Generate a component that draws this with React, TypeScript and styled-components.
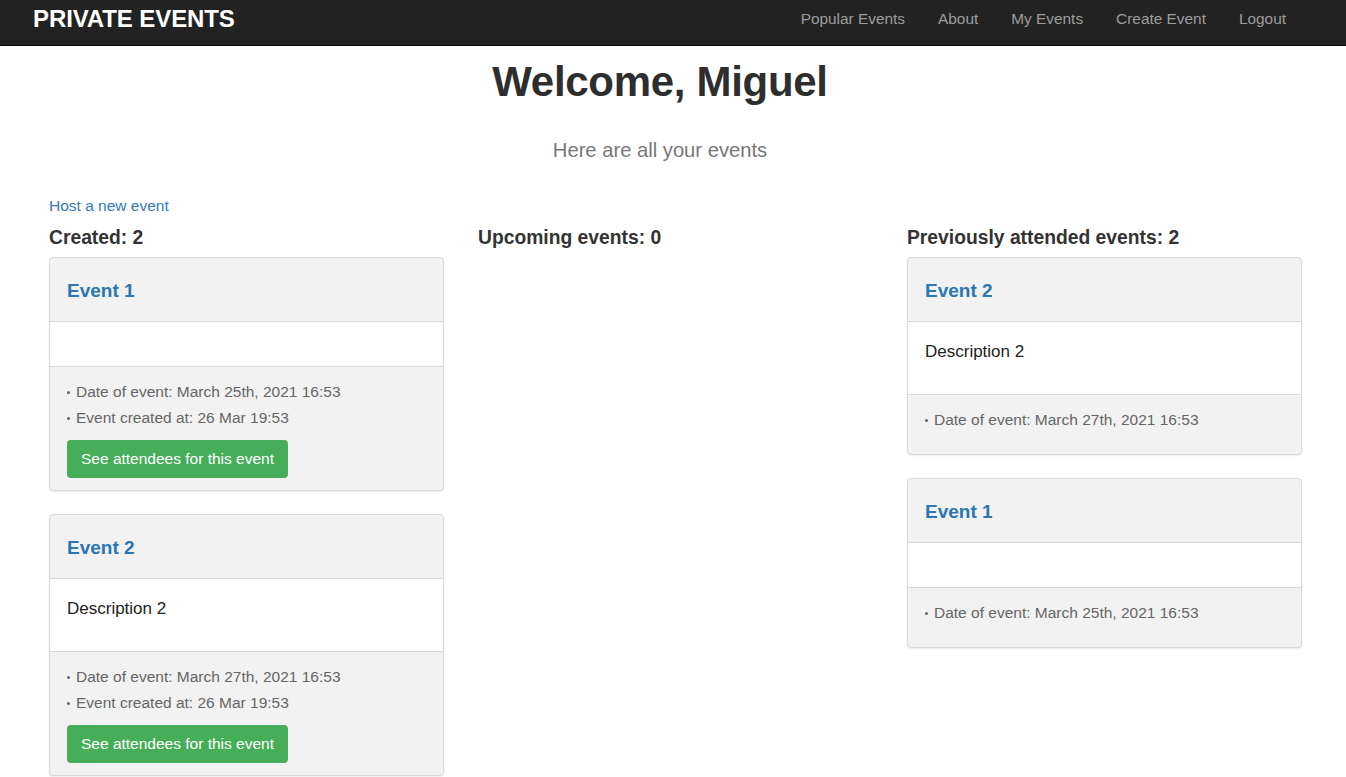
import React from "react";
import styled, { createGlobalStyle } from "styled-components";

const GlobalStyle = createGlobalStyle`
  html, body { margin: 0; padding: 0; background: #fff; }
  body {
    font-family: "Liberation Sans", Arial, Helvetica, sans-serif;
    color: #333;
    font-size: 15px;
    line-height: 20px;
  }
  * { box-sizing: border-box; }
`;

const Navbar = styled.nav`
  height: 46px;
  background: #222;
  border-bottom: 1px solid #080808;
  display: flex;
  align-items: center;
  justify-content: space-between;
  padding: 0 60px 0 33px;
`;

const Brand = styled.a`
  color: #fff;
  font-weight: bold;
  font-size: 24px;
  letter-spacing: -0.1px;
  text-decoration: none;
  line-height: 24px;
  margin-top: -8px;
`;

const NavLinks = styled.div`
  display: flex;
  gap: 33px;
  margin-top: -8px;
`;

const NavLink = styled.a`
  color: #9d9d9d;
  font-size: 15.4px;
  text-decoration: none;
`;

const Hero = styled.header`
  text-align: center;
  padding: 13px 26px 0 0;
`;

const Title = styled.h1`
  margin: 0;
  font-size: 42px;
  line-height: 46px;
  font-weight: bold;
  letter-spacing: -0.3px;
  color: #2e2e2e;
`;

const Subtitle = styled.p`
  margin: 33px 0 0;
  font-size: 20.2px;
  line-height: 24px;
  color: #777;
`;

const Main = styled.main`
  padding: 34px 0 0 34px;
`;

const HostLink = styled.a`
  display: block;
  margin-left: 15px;
  color: #337ab7;
  text-decoration: none;
  font-size: 15.5px;
  line-height: 20px;
`;

const Columns = styled.div`
  display: grid;
  grid-template-columns: repeat(3, 429px);
  margin-top: 11px;
`;

const Column = styled.section`
  padding: 0 15px;
`;

const ColumnHeading = styled.h3`
  margin: 0 0 8px;
  font-size: 19.3px;
  line-height: 22px;
  font-weight: bold;
  color: #333;
`;

const Card = styled.article`
  width: 395px;
  border: 1px solid #d9d9d9;
  border-radius: 4px;
  box-shadow: 0 1px 2px rgba(0, 0, 0, 0.08);
  margin-bottom: 23px;
  overflow: hidden;
  background: #f2f2f2;
`;

const CardHeader = styled.div`
  padding: 22px 17px 19px;
  border-bottom: 1px solid #d9d9d9;
`;

const CardTitle = styled.a`
  display: block;
  font-size: 19px;
  line-height: 22px;
  font-weight: bold;
  color: #2b76b3;
  text-decoration: none;
`;

const CardBody = styled.div`
  background: #fff;
  padding: 20px 17px 24px;
  border-bottom: 1px solid #d9d9d9;
  min-height: 45px;
`;

const Description = styled.p`
  margin: 0 0 8px;
  font-size: 17px;
  line-height: 20px;
  color: #222;
`;

const CardFooter = styled.div`
  padding: 15px 17px 12px;
`;

const InfoList = styled.ul`
  list-style: none;
  margin: 0 0 12px;
  padding: 0;
  display: flex;
  flex-direction: column;
  gap: 6px;
`;

const InfoItem = styled.li`
  display: flex;
  align-items: center;
  font-size: 15.5px;
  line-height: 20px;
  color: #666;
  &::before {
    content: "";
    width: 3px;
    height: 3px;
    border-radius: 50%;
    background: #666;
    margin-right: 6px;
    flex: none;
  }
`;

const SuccessButton = styled.button`
  display: block;
  height: 38px;
  padding: 0 14px;
  border: none;
  border-radius: 4px;
  background: #46ae58;
  color: #fff;
  font-family: inherit;
  font-size: 15.5px;
  cursor: pointer;
`;

type EventCardProps = {
  title: string;
  description?: string;
  date: string;
  created?: string;
  showAttendees?: boolean;
};

function EventCard({ title, description, date, created, showAttendees }: EventCardProps) {
  return (
    <Card>
      <CardHeader>
        <CardTitle href="#">{title}</CardTitle>
      </CardHeader>
      <CardBody>{description && <Description>{description}</Description>}</CardBody>
      <CardFooter>
        <InfoList>
          <InfoItem>Date of event: {date}</InfoItem>
          {created && <InfoItem>Event created at: {created}</InfoItem>}
        </InfoList>
        {showAttendees && <SuccessButton>See attendees for this event</SuccessButton>}
      </CardFooter>
    </Card>
  );
}

export default function App() {
  return (
    <>
      <GlobalStyle />
      <Navbar>
        <Brand href="#">PRIVATE EVENTS</Brand>
        <NavLinks>
          <NavLink href="#">Popular Events</NavLink>
          <NavLink href="#">About</NavLink>
          <NavLink href="#">My Events</NavLink>
          <NavLink href="#">Create Event</NavLink>
          <NavLink href="#">Logout</NavLink>
        </NavLinks>
      </Navbar>
      <Hero>
        <Title>Welcome, Miguel</Title>
        <Subtitle>Here are all your events</Subtitle>
      </Hero>
      <Main>
        <HostLink href="#">Host a new event</HostLink>
        <Columns>
          <Column>
            <ColumnHeading>Created: 2</ColumnHeading>
            <EventCard
              title="Event 1"
              date="March 25th, 2021 16:53"
              created="26 Mar 19:53"
              showAttendees
            />
            <EventCard
              title="Event 2"
              description="Description 2"
              date="March 27th, 2021 16:53"
              created="26 Mar 19:53"
              showAttendees
            />
          </Column>
          <Column>
            <ColumnHeading>Upcoming events: 0</ColumnHeading>
          </Column>
          <Column>
            <ColumnHeading>Previously attended events: 2</ColumnHeading>
            <EventCard title="Event 2" description="Description 2" date="March 27th, 2021 16:53" />
            <EventCard title="Event 1" date="March 25th, 2021 16:53" />
          </Column>
        </Columns>
      </Main>
    </>
  );
}
